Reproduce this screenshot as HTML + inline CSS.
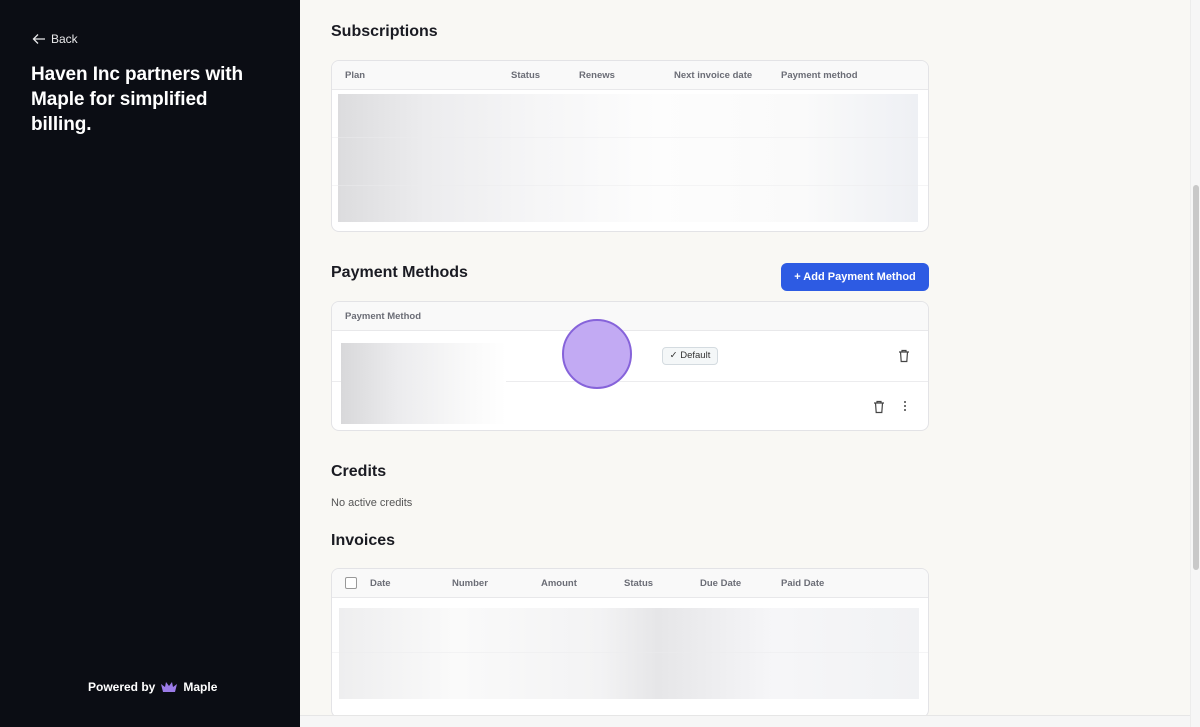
<!DOCTYPE html>
<html style="overflow:hidden;height:727px"><head><meta charset="utf-8"><style>
*{box-sizing:border-box;margin:0;padding:0}
body{width:1200px;height:727px;overflow:hidden;font-family:"Liberation Sans",sans-serif;background:#f9f8f4;position:relative;color:#1a1b22}
.side{position:absolute;left:0;top:0;width:300px;height:727px;background:#0b0d14;color:#fff}
.back{position:absolute;left:32px;top:32px;font-size:12px;color:#e8e8ea;display:flex;align-items:center;gap:5px}
.side h1{position:absolute;left:31px;top:62px;width:240px;font-size:19px;line-height:25px;font-weight:700;letter-spacing:-0.1px}
.pow{position:absolute;left:88px;top:680px;font-size:12px;font-weight:700;display:flex;align-items:center;gap:5px}
h2{position:absolute;left:331px;font-size:16px;font-weight:700;color:#1a1b22}
.card{position:absolute;left:331px;width:598px;background:#fff;border:1px solid #e3e3e6;border-radius:8px;overflow:hidden}
.th{height:29px;border-bottom:1px solid #e8e8ea;background:#f9f9f9;font-size:9.5px;font-weight:700;color:#6b6d76;position:relative}
.th span{position:absolute;top:9px}
.blur{position:absolute;background:linear-gradient(90deg,#dcdcde 0%,#ececee 15%,#f6f6f7 35%,#fdfdfd 55%,#fafafa 80%,#eef0f4 100%)}
.row{position:absolute;left:0;right:0;border-top:1px solid #ececee}
.btn{position:absolute;left:781px;top:263px;width:148px;height:28px;background:#2d5be3;border-radius:6px;color:#fff;font-size:11px;font-weight:700;text-align:center;line-height:28px}
.sb{position:absolute;right:0;top:0;width:10px;height:727px;background:#f6f6f6;border-left:1px solid #ececec}
.sb div{position:absolute;left:2px;top:185px;width:6px;height:385px;background:#c8c8c8;border-radius:3px}
</style></head><body>
<div class="side">
 <div class="back"><svg width="14" height="12" viewBox="0 0 14 12"><path d="M13 6H2M6 1.5L1.5 6 6 10.5" stroke="#e8e8ea" stroke-width="1.3" fill="none"/></svg>Back</div>
 <h1>Haven Inc partners with Maple for simplified billing.</h1>
 <div class="pow">Powered by <svg width="18" height="14" viewBox="0 0 18 14"><path d="M1 4l4 3 1-5 3 4 3-4 1 5 4-3-2 8H3z" fill="#9b7be8"/></svg>Maple</div>
</div>
<h2 style="top:23px">Subscriptions</h2>
<div class="card" style="top:60px;height:172px">
 <div class="th"><span style="left:13px">Plan</span><span style="left:179px">Status</span><span style="left:247px">Renews</span><span style="left:342px">Next invoice date</span><span style="left:449px">Payment method</span></div>
 <div class="blur" style="left:6px;top:33px;width:580px;height:128px"></div>
 <div class="row" style="top:76px;opacity:.5"></div>
 <div class="row" style="top:124px;opacity:.5"></div>
</div>
<h2 style="top:264px">Payment Methods</h2>
<div class="btn">+ Add Payment Method</div>
<div class="card" style="top:301px;height:130px">
 <div class="th"><span style="left:13px">Payment Method</span></div>
 <div class="row" style="top:79px"></div>
 <div class="blur" style="left:9px;top:41px;width:165px;height:81px;background:linear-gradient(90deg,#d8d8da,#ececee 35%,#fafafa 80%,#fff)"></div>
 <div style="position:absolute;left:330px;top:45px;width:56px;height:18px;border:1px solid #d4dbe0;border-radius:4px;background:#f4f7f8;font-size:9.5px;line-height:16px;text-align:center;color:#333">✓ Default</div>
 <svg style="position:absolute;left:566px;top:47px" width="12" height="14" viewBox="0 0 12 14"><path d="M1 3h10M4 3V1.5h4V3M2.5 3l.7 9.5h5.6L9.5 3" stroke="#444" stroke-width="1.2" fill="none"/></svg>
 <svg style="position:absolute;left:541px;top:98px" width="12" height="14" viewBox="0 0 12 14"><path d="M1 3h10M4 3V1.5h4V3M2.5 3l.7 9.5h5.6L9.5 3" stroke="#444" stroke-width="1.2" fill="none"/></svg>
 <div style="position:absolute;left:572px;top:99px;width:2px;font-size:0"><div style="width:2px;height:2px;background:#444;border-radius:1px;margin-bottom:2px"></div><div style="width:2px;height:2px;background:#444;border-radius:1px;margin-bottom:2px"></div><div style="width:2px;height:2px;background:#444;border-radius:1px"></div></div>
</div>
<div style="position:absolute;left:562px;top:319px;width:70px;height:70px;border-radius:50%;background:#c2aaf3;border:2px solid #8663da"></div>
<h2 style="top:463px">Credits</h2>
<div style="position:absolute;left:331px;top:497px;font-size:11px;color:#555">No active credits</div>
<h2 style="top:532px">Invoices</h2>
<div class="card" style="top:568px;height:150px">
 <div class="th"><div style="position:absolute;left:13px;top:8px;width:12px;height:12px;border:1px solid #999;border-radius:2px;background:#fff"></div><span style="left:38px">Date</span><span style="left:120px">Number</span><span style="left:209px">Amount</span><span style="left:292px">Status</span><span style="left:368px">Due Date</span><span style="left:449px">Paid Date</span></div>
 <div class="blur" style="left:7px;top:39px;width:580px;height:91px;background:linear-gradient(90deg,#eeeeef,#fafafa 20%,#f3f3f4 45%,#e6e6e8 55%,#f6f6f8 75%,#f1f2f4)"></div>
 <div class="row" style="top:83px;opacity:.5"></div>
</div>
<div style="position:absolute;left:300px;top:715px;width:890px;height:12px;background:#f6f6f6;border-top:1px solid #e6e6e6"></div>
<div class="sb"><div></div></div>
</body></html>
